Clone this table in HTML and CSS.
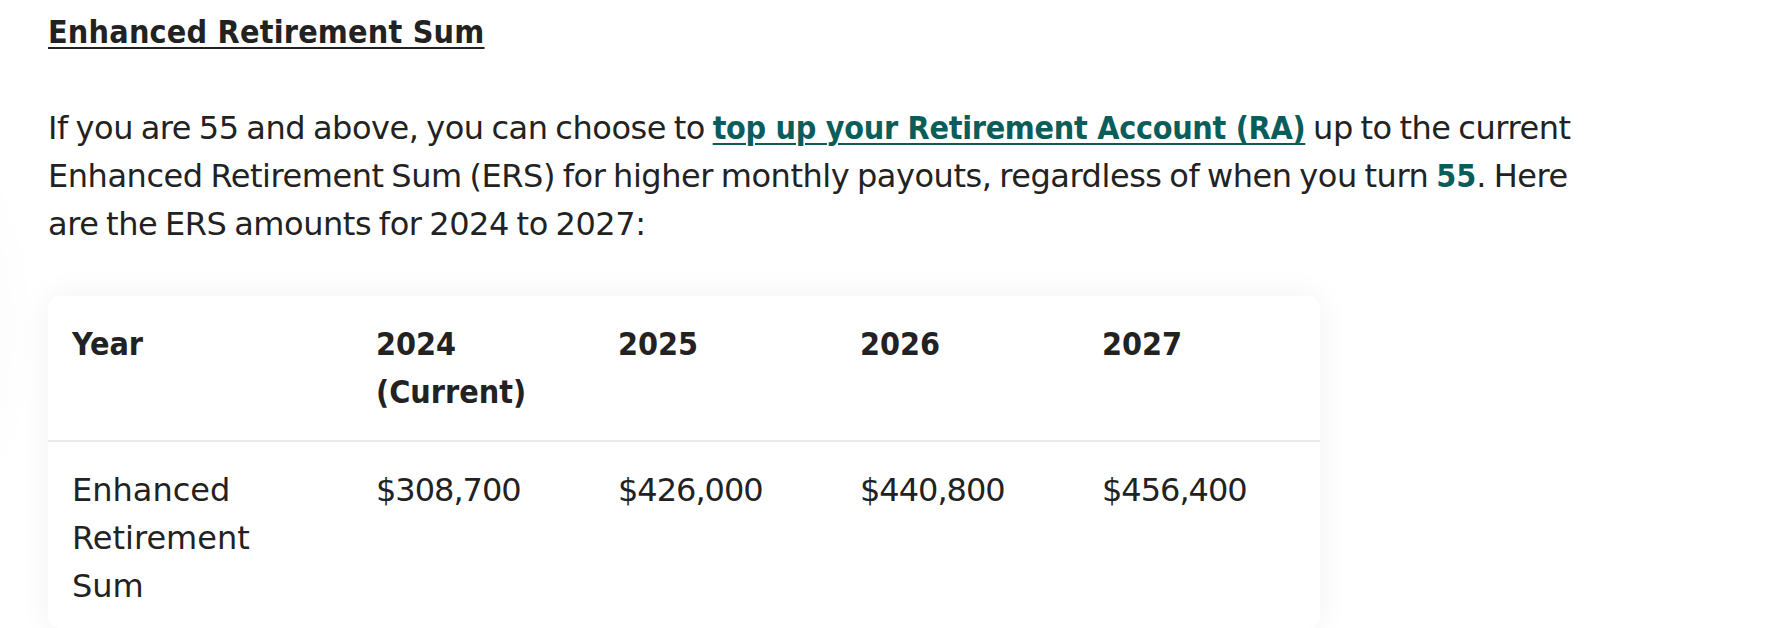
FILE: index.html
```html
<!DOCTYPE html>
<html lang="en">
<head>
<meta charset="utf-8">
<title>Enhanced Retirement Sum</title>
<link rel="stylesheet" href="styles.css">
</head>
<body>
<div class="backdrop"></div>
<main class="content">
  <h3 class="section-title">Enhanced Retirement Sum</h3>
  <p class="intro">If you are 55 and above, you can choose to <a class="link" href="#">top up your Retirement Account (RA)</a> up to the current Enhanced Retirement Sum (ERS) for higher monthly payouts, regardless of when you turn <strong class="hl">55</strong>. Here are the ERS amounts for 2024 to 2027:</p>
  <div class="card">
    <table class="ers-table">
      <colgroup>
        <col class="col-first">
        <col class="col-year">
        <col class="col-year">
        <col class="col-year">
        <col class="col-year">
      </colgroup>
      <thead>
        <tr>
          <th>Year</th>
          <th>2024<br>(Current)</th>
          <th>2025</th>
          <th>2026</th>
          <th>2027</th>
        </tr>
      </thead>
      <tbody>
        <tr>
          <td>Enhanced Retirement Sum</td>
          <td class="amount">$308,700</td>
          <td class="amount">$426,000</td>
          <td class="amount">$440,800</td>
          <td class="amount">$456,400</td>
        </tr>
      </tbody>
    </table>
  </div>
</main>
</body>
</html>
```

FILE: styles.css
```css
html, body {
  margin: 0;
  padding: 0;
  background: #ffffff;
}

body {
  font-family: "DejaVu Sans", "Open Sans", sans-serif;
  font-size: 32px;
  line-height: 48px;
  color: #222222;
  position: relative;
  overflow: hidden;
  height: 628px;
}

.backdrop {
  position: absolute;
  left: -160px;
  top: 120px;
  width: 200px;
  height: 420px;
  border-radius: 50%;
  background: radial-gradient(ellipse at center, rgba(0,0,0,0.025), rgba(0,0,0,0) 70%);
  pointer-events: none;
}

.content {
  position: relative;
  padding: 8px 0 0 48px;
}

.section-title {
  margin: 0;
  font-family: "DejaVu Sans Condensed", "DejaVu Sans", sans-serif;
  font-stretch: condensed;
  font-weight: 700;
  font-size: 32px;
  line-height: 48px;
  letter-spacing: 0.2px;
  text-decoration: underline;
  text-decoration-thickness: 2px;
  text-underline-offset: 4px;
  color: #222222;
}

.intro {
  margin: 48px 0 0 0;
  max-width: 1560px;
  letter-spacing: -0.45px;
  word-spacing: -2px;
}

.link {
  color: #0b5d5a;
  font-family: "DejaVu Sans Condensed", "DejaVu Sans", sans-serif;
  font-stretch: condensed;
  font-weight: 700;
  letter-spacing: -0.3px;
  word-spacing: 0;
  text-decoration: underline;
  text-decoration-thickness: 2px;
  text-underline-offset: 4px;
}

.hl {
  color: #0b5d5a;
  font-family: "DejaVu Sans Condensed", "DejaVu Sans", sans-serif;
  font-stretch: condensed;
  font-weight: 700;
  letter-spacing: 0;
}

.card {
  margin-top: 48px;
  width: 1272px;
  background: #ffffff;
  border-radius: 12px;
  box-shadow: 0 0 32px rgba(0, 0, 0, 0.06);
  overflow: hidden;
}

.ers-table {
  width: 1272px;
  border-collapse: collapse;
  table-layout: fixed;
}

.col-first {
  width: 304px;
}

.col-year {
  width: 242px;
}

.ers-table th,
.ers-table td {
  text-align: left;
  vertical-align: top;
  padding: 24px;
}

.ers-table th {
  font-family: "DejaVu Sans Condensed", "DejaVu Sans", sans-serif;
  font-stretch: condensed;
  font-weight: 700;
}

.ers-table thead tr {
  border-bottom: 2px solid #ebebeb;
}

.ers-table td {
  padding-bottom: 18px;
}

.ers-table td.amount {
  letter-spacing: -1px;
}
```
